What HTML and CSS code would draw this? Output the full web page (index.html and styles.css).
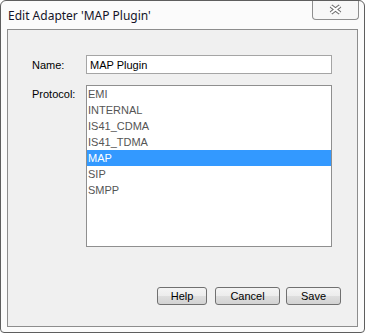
FILE: index.html
```html
<!DOCTYPE html>
<html>
<head>
  <title>Edit Adapter</title>
  <link rel="stylesheet" href="styles.css">
</head>
<body>
  <div class="window">
    <div class="titlebar">
      <span class="title">Edit Adapter 'MAP Plugin'</span>
      <div class="close">
        <svg width="15" height="11" viewBox="0 0 15 11">
          <line x1="3" y1="2" x2="12" y2="9" stroke="#6a6a6a" stroke-width="4"/>
          <line x1="12" y1="2" x2="3" y2="9" stroke="#6a6a6a" stroke-width="4"/>
          <line x1="3" y1="2" x2="12" y2="9" stroke="#ffffff" stroke-width="2"/>
          <line x1="12" y1="2" x2="3" y2="9" stroke="#ffffff" stroke-width="2"/>
        </svg>
      </div>
    </div>

    <div class="client">
      <div class="form">
        <label class="label label-name" for="name">Name:</label>
        <input type="text" id="name" class="field" value="MAP Plugin">

        <label class="label">Protocol:</label>
        <ul class="list">
          <li>EMI</li>
          <li>INTERNAL</li>
          <li>IS41_CDMA</li>
          <li>IS41_TDMA</li>
          <li class="selected">MAP</li>
          <li>SIP</li>
          <li>SMPP</li>
        </ul>
      </div>

      <div class="buttons">
        <button class="btn btn-help">Help</button>
        <button class="btn btn-cancel">Cancel</button>
        <button class="btn btn-save">Save</button>
      </div>
    </div>
  </div>
</body>
</html>
```

FILE: styles.css
```css
body { margin: 0; background: #ffffff; font-family: "Liberation Sans", Arial, sans-serif; font-size: 11px; }

.window { width: 365px; height: 333px; box-sizing: border-box; border: 1px solid #5e5e5e; border-radius: 6px 6px 4px 4px; background: #fbfbfb; display: flex; flex-direction: column; }

.titlebar { height: 28px; display: flex; justify-content: space-between; align-items: flex-start; }
.title { font-family: "Noto Sans", sans-serif; font-size: 12px; color: #141428; padding: 7px 0 0 7px; line-height: 16px; }
.close { width: 45px; height: 18px; margin-right: 5px; border: 1px solid #8e8e8e; border-top: none; border-radius: 0 0 4px 4px; background: #f7f7f7; display: flex; align-items: center; justify-content: center; }
.close svg { display: block; margin-top: -1px; }

.client { flex: 1; margin: 0 6px 5px 6px; border: 1px solid #8d8d8d; background: #f0f0f0; display: flex; flex-direction: column; }

.form { display: grid; grid-template-columns: 54px 1fr; row-gap: 11px; padding: 25px 25px 0 24px; }
.label { color: #000; align-self: start; padding-top: 3px; }
.label-name { align-self: center; padding-top: 0; }

.field { height: 19px; box-sizing: border-box; border: 1px solid #a5a5a5; background: #fff; padding: 0 3px; font-family: inherit; font-size: 11px; color: #000; outline: none; }

.list { margin: 0; padding: 0; list-style: none; height: 162px; box-sizing: border-box; border: 1px solid #8f8f8f; background: #fff; }
.list li { height: 16px; line-height: 16px; padding-left: 1px; color: #555; }
.list li.selected { background: #3399ff; color: #fff; }

.buttons { margin-top: auto; display: flex; justify-content: flex-end; padding: 0 16px 21px 0; }
.btn { height: 18px; box-sizing: border-box; border: 1px solid #707070; border-radius: 3px; background: linear-gradient(#f4f4f4, #ececec 50%, #dedede 50%, #d2d2d2); font-family: inherit; font-size: 11px; color: #000; padding: 0; }
.btn-help { width: 50px; margin-right: 8px; }
.btn-cancel { width: 65px; margin-right: 6px; }
.btn-save { width: 55px; }
```
